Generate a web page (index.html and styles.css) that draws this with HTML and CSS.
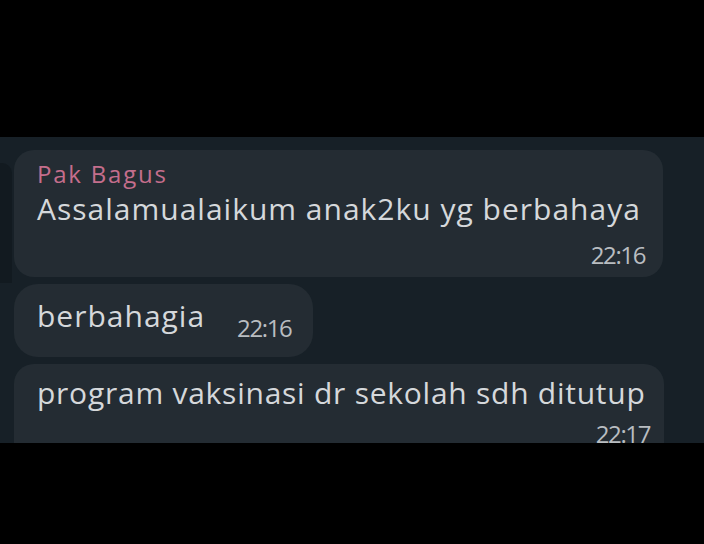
FILE: index.html
```html
<!DOCTYPE html>
<html>
<head>
<meta charset="utf-8">
<link rel="stylesheet" href="styles.css">
</head>
<body>
<div class="screen">
  <div class="top"></div>
  <div class="chat">
    <div class="side"></div>
    <div class="bubble b1">
      <div class="name">Pak Bagus</div>
      <div class="text">Assalamualaikum anak2ku yg berbahaya</div>
      <div class="time">22:16</div>
    </div>
    <div class="bubble b2">
      <span class="text">berbahagia</span>
      <span class="time">22:16</span>
    </div>
    <div class="bubble b3">
      <div class="text">program vaksinasi dr sekolah sdh ditutup</div>
      <div class="time">22:17</div>
    </div>
  </div>
</div>
</body>
</html>
```
FILE: styles.css
```css
html, body {
  margin: 0;
  padding: 0;
  background: #000;
}
.screen {
  width: 704px;
  height: 544px;
  background: #000;
  display: flex;
  flex-direction: column;
  font-family: "Open Sans", "Noto Sans", sans-serif;
}
.top {
  height: 137px;
  flex: none;
}
.chat {
  position: relative;
  height: 306px;
  flex: none;
  overflow: hidden;
  background: #172027;
  padding: 13px 0 0 14px;
  box-sizing: border-box;
  display: flex;
  flex-direction: column;
  align-items: flex-start;
  gap: 5px;
}
.side {
  position: absolute;
  left: 0;
  top: 26px;
  width: 12px;
  height: 120px;
  background: #121a20;
  border-top-right-radius: 10px;
}
.bubble {
  position: relative;
  flex: none;
  background: #242c33;
  border-radius: 20px;
  box-sizing: border-box;
  color: #d5d8db;
  white-space: nowrap;
}
.b1 {
  width: 649px;
  height: 127px;
  padding: 10px 18px 0 23px;
  display: flex;
  flex-direction: column;
}
.name {
  color: #c46e8c;
  font-size: 24px;
  line-height: 28px;
  letter-spacing: 1.8px;
}
.text {
  font-size: 30px;
  line-height: 38px;
  letter-spacing: 1px;
}
.b1 .text {
  margin-top: 2px;
}
.time {
  font-size: 24px;
  color: #b9bdc1;
  letter-spacing: -1.4px;
  align-self: flex-end;
  line-height: 26px;
}
.b1 .time {
  margin-top: 14px;
}
.b2 {
  width: 299px;
  height: 73px;
  margin-top: 2px;
  padding: 0 0 0 23px;
  display: flex;
  align-items: center;
  gap: 32px;
  border-radius: 24px;
}
.b2 .text {
  margin-top: -9px;
}
.b2 .time {
  align-self: auto;
  margin-top: 14px;
}
.b3 {
  width: 650px;
  height: 110px;
  margin-top: 2px;
  padding: 10px 14px 0 23px;
  display: flex;
  flex-direction: column;
}
.b3 .text {
  letter-spacing: 0.75px;
}
.b3 .time {
  margin-top: 9px;
}
```
